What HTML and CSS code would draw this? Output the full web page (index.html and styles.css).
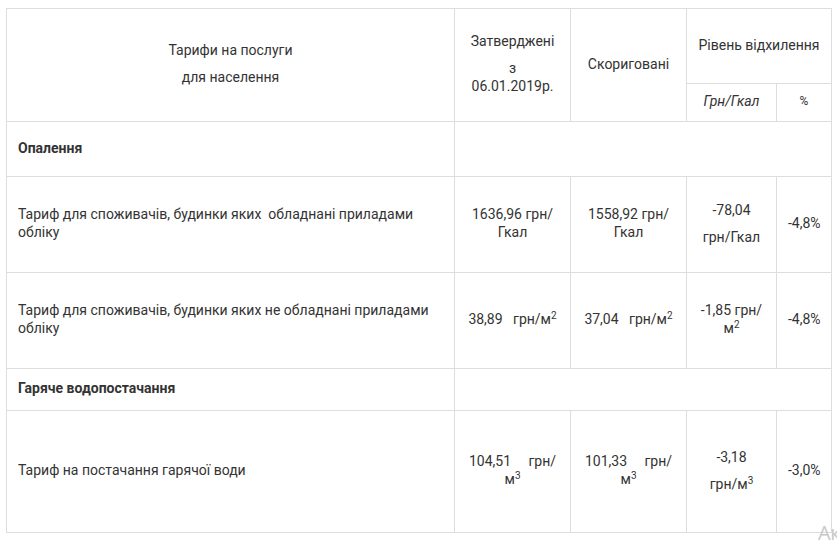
FILE: index.html
```html
<!DOCTYPE html>
<html lang="uk">
<head>
<meta charset="utf-8">
<title>Тарифи</title>
<link rel="stylesheet" href="styles.css">
</head>
<body>
<table class="tariffs">
  <colgroup>
    <col class="c-name">
    <col class="c-num">
    <col class="c-num">
    <col class="c-dev">
    <col class="c-pct">
  </colgroup>
  <tr class="r-head1">
    <td rowspan="2" class="center"><p>Тарифи на послуги</p><p>для населення</p></td>
    <td rowspan="2" class="center"><p>Затверджені</p><p>з<br>06.01.2019р.</p></td>
    <td rowspan="2" class="center">Скориговані</td>
    <td colspan="2" class="center nowrap">Рівень відхилення</td>
  </tr>
  <tr class="r-head2">
    <td class="center italic">Грн/Гкал</td>
    <td class="center small">%</td>
  </tr>
  <tr class="r-sec1">
    <td class="bold">Опалення</td>
    <td colspan="4"></td>
  </tr>
  <tr class="r-row">
    <td>Тариф для споживачів, будинки яких&nbsp; обладнані приладами<br>обліку</td>
    <td class="center">1636,96 грн/<br>Гкал</td>
    <td class="center">1558,92 грн/<br>Гкал</td>
    <td class="center"><p>-78,04</p><p>грн/Гкал</p></td>
    <td class="center">-4,8%</td>
  </tr>
  <tr class="r-row">
    <td>Тариф для споживачів, будинки яких не обладнані приладами<br>обліку</td>
    <td class="center nowrap">38,89&nbsp;&nbsp; грн/м<sup>2</sup></td>
    <td class="center nowrap">37,04&nbsp;&nbsp; грн/м<sup>2</sup></td>
    <td class="center">-1,85 грн/<br>м<sup>2</sup></td>
    <td class="center">-4,8%</td>
  </tr>
  <tr class="r-sec2">
    <td class="bold">Гаряче водопостачання</td>
    <td colspan="4"></td>
  </tr>
  <tr class="r-last">
    <td>Тариф на постачання гарячої води</td>
    <td class="center nowrap">104,51&nbsp;&nbsp;&nbsp;&nbsp; грн/<br>м<sup>3</sup></td>
    <td class="center nowrap">101,33&nbsp;&nbsp;&nbsp;&nbsp; грн/<br>м<sup>3</sup></td>
    <td class="center"><p>-3,18</p><p class="nowrap">грн/м<sup>3</sup></p></td>
    <td class="center">-3,0%</td>
  </tr>
</table>
<div class="watermark">Ак</div>
</body>
</html>
```

FILE: styles.css
```css
html, body {
  margin: 0;
  padding: 0;
  background: #ffffff;
  overflow: hidden;
}
body {
  font-family: Roboto, "Liberation Sans", sans-serif;
  font-size: 14px;
  line-height: 18px;
  color: #333333;
  padding: 8px 0 0 6px;
  height: 543px;
  box-sizing: border-box;
  position: relative;
}
.tariffs {
  border-collapse: collapse;
  table-layout: fixed;
  width: 825px;
}
.c-name { width: 448px; }
.c-num { width: 116px; }
.c-dev { width: 90px; }
.c-pct { width: 55px; }
.tariffs td {
  border: 1px solid #dddddd;
  padding: 0 11px 3px;
  vertical-align: middle;
}
.tariffs td p {
  margin: 0 0 9px;
}
.tariffs td p:last-child {
  margin-bottom: 0;
}
.center { text-align: center; }
.nowrap { white-space: nowrap; }
.italic { font-style: italic; }
.small { font-size: 12px; }
.bold { font-weight: 700; }
sup {
  font-size: 10px;
  line-height: 0;
  vertical-align: 5px;
}
.r-head1 { height: 75px; }
.r-head2 { height: 38px; }
.r-sec1 { height: 55px; }
.r-row { height: 96px; }
.r-sec2 { height: 42px; }
.r-last { height: 122px; }
.watermark {
  position: absolute;
  left: 818px;
  top: 523px;
  font-size: 20px;
  line-height: 20px;
  letter-spacing: -0.5px;
  color: #c8c8c8;
  white-space: nowrap;
  font-family: "Open Sans", "Liberation Sans", sans-serif;
}
```
